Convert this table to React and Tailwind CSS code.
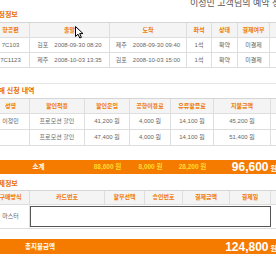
const font = { fontFamily: '"Liberation Sans", "Noto Sans CJK KR", sans-serif' };

const t1 = ["w-[38px]", "w-[80px]", "w-[77px]", "w-[25px]", "w-[26px]", "w-[32px]", "w-[12px]"];
const t2 = ["w-[38px]", "w-[55px]", "w-[45px]", "w-[41px]", "w-[43px]", "w-[57px]", "w-[11px]"];
const t3 = ["w-[38px]", "w-[75px]", "w-[40px]", "w-[38px]", "w-[47px]", "w-[41px]", "w-[11px]"];

function Row({ widths, cells, head, h }) {
    return (
        <div className={`flex border-b border-[#dedede] ${h} ${head ? "bg-[#f4f4f4]" : ""}`}>
            {widths.map((w, i) => (
                <div
                    key={i}
                    className={`${w} shrink-0 flex items-center justify-center whitespace-nowrap ${i < widths.length - 1 ? "border-r border-[#dedede]" : ""} ${head ? "text-[#f07800] font-bold" : "text-[#666]"}`}
                >
                    {cells[i]}
                </div>
            ))}
        </div>
    );
}

function Place({ city, date }) {
    return (
        <span className="flex items-center gap-[6px]">
            <span>{city}</span>
            <span>{date}</span>
        </span>
    );
}

function Heading({ children, className }) {
    return (
        <div className={`flex items-center text-[7px] font-bold text-[#e86f00] whitespace-nowrap ${className}`}>
            {children}
        </div>
    );
}

export default function App() {
    return (
        <div className="w-[276px] h-[260px] overflow-hidden bg-white" style={font}>
            <div className="relative w-[290px] -ml-[8px] -mt-[2px] text-[6px]">
                <div className="h-[10px] pl-[198px] text-[9px] leading-[10px] text-[#555] whitespace-nowrap">
                    이정민 고객님의 예약 정보
                </div>
                <Heading className="h-[14px]">여정정보</Heading>

                <div className="border-t border-[#d6d6d6]">
                    <Row widths={t1} head h="h-[15px]" cells={["항공편", "출발", "도착", "좌석", "상태", "결제여부", ""]} />
                    <Row
                        widths={t1}
                        h="h-[15px]"
                        cells={["7C103", <Place city="김포" date="2008-09-30 08:20" />, <Place city="제주" date="2008-09-30 09:40" />, "1석", "확약", "미결제", ""]}
                    />
                    <Row
                        widths={t1}
                        h="h-[15px]"
                        cells={["7C1123", <Place city="제주" date="2008-10-03 13:35" />, <Place city="김포" date="2008-10-03 15:00" />, "1석", "확약", "미결제", ""]}
                    />
                </div>

                <div className="h-[16px] border-b border-[#e6e6e6]" />
                <Heading className="h-[14px]">예매 신청 내역</Heading>

                <div className="border-t border-[#d6d6d6]">
                    <Row widths={t2} head h="h-[15px]" cells={["성명", "할인적용", "할인운임", "공항이용료", "유류할증료", "지불금액", ""]} />
                    <Row widths={t2} h="h-[16px]" cells={["이정민", "프로모션 할인", "41,200 원", "4,000 원", "14,100 원", "45,200 원", ""]} />
                    <Row widths={t2} h="h-[16px]" cells={["", "프로모션 할인", "47,400 원", "4,000 원", "14,100 원", "51,400 원", ""]} />
                </div>

                <div className="h-[14px]" />
                <div className="h-[14px] bg-[#f57a00] flex items-center font-bold whitespace-nowrap text-[6.5px]">
                    <div className="w-[93px] text-center text-white">소계</div>
                    <div className="w-[45px] text-center text-[#ffdd2e]">88,600 원</div>
                    <div className="w-[41px] text-center text-[#ffdd2e]">8,000 원</div>
                    <div className="w-[43px] text-center text-[#ffdd2e]">28,200 원</div>
                    <div className="flex-1 flex items-baseline justify-end pr-[5px] text-white">
                        <span className="text-[12px]">96,600</span>
                        <span className="ml-[2px] text-[7px]">원</span>
                    </div>
                </div>

                <Heading className="h-[16px] pt-[4px]">결제정보</Heading>

                <div className="border-t border-[#d6d6d6]">
                    <Row widths={t3} head h="h-[14px]" cells={["구매방식", "카드번호", "할부선택", "승인번호", "결제금액", "결제일", ""]} />
                    <div className="flex h-[24px] border-b border-[#dedede]">
                        <div className="w-[38px] shrink-0 flex items-center justify-center border-r border-[#dedede] text-[#666]">
                            마스터
                        </div>
                        <div className="w-[241px] shrink-0 my-[1px] border border-[#555] bg-white" />
                    </div>
                </div>

                <div className="h-[10px]" />
                <div className="h-[15px] bg-[#f57a00] flex items-center font-bold whitespace-nowrap text-white text-[6.5px]">
                    <div className="w-[96px] text-center">총지불금액</div>
                    <div className="flex-1 flex items-baseline justify-end pr-[5px]">
                        <span className="text-[12px]">124,800</span>
                        <span className="ml-[2px] text-[7px]">원</span>
                    </div>
                </div>

                <svg className="absolute left-[83px] top-[28px]" width="10" height="13" viewBox="0 0 10 13">
                    <path d="M0.5 0.5 L0.5 10.5 L3 8.2 L4.8 12 L6.4 11.3 L4.7 7.6 L8 7.6 Z" fill="#fff" stroke="#000" strokeWidth="1" strokeLinejoin="round" />
                </svg>
            </div>
        </div>
    );
}
